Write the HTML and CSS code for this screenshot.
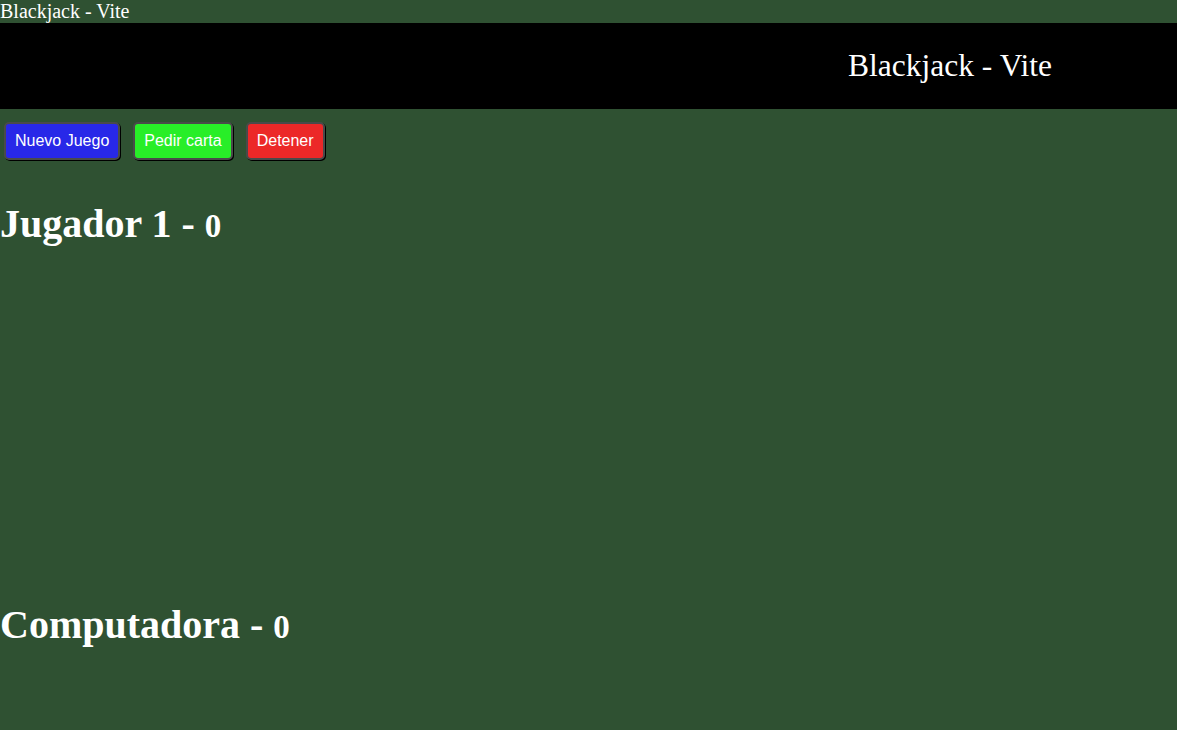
FILE: index.html
```html
<!DOCTYPE html>
<html lang="es">
<head>
<meta charset="utf-8">
<title>Blackjack - Vite</title>
<link rel="stylesheet" href="styles.css">
</head>
<body>
<div class="page-title">Blackjack - Vite</div>
<header class="topbar">
  <h1 class="topbar-title">Blackjack - Vite</h1>
</header>
<div class="controls">
  <button class="btn btn-blue">Nuevo Juego</button>
  <button class="btn btn-green">Pedir carta</button>
  <button class="btn btn-red">Detener</button>
</div>
<section class="player">
  <h1 class="player-name">Jugador 1 - <small>0</small></h1>
  <div class="cards"></div>
</section>
<section class="player">
  <h1 class="player-name">Computadora - <small>0</small></h1>
  <div class="cards cards-last"></div>
</section>
</body>
</html>
```
FILE: styles.css
```css
html, body {
  margin: 0;
  padding: 0;
}
html {
  background: #2f5132;
}
body {
  background: #2f5132;
  color: #ffffff;
  font-family: "Liberation Serif", "Times New Roman", serif;
  font-size: 20px;
}
.page-title {
  line-height: 23px;
  height: 23px;
}
.topbar {
  background: #000000;
  height: 86px;
  display: flex;
  align-items: center;
  justify-content: flex-end;
  padding-right: 125px;
}
.topbar-title {
  margin: 0;
  font-size: 31.5px;
  font-weight: normal;
}
.controls {
  display: flex;
  gap: 13px;
  padding: 13px 0 0 4px;
}
.btn {
  font-family: "Liberation Sans", Arial, sans-serif;
  font-size: 16px;
  color: #ffffff;
  height: 38px;
  padding: 0 9px;
  border: 2px solid #4a4a4a;
  border-radius: 5px;
  box-shadow: 1px 1px 0 #000000;
  cursor: pointer;
}
.btn-blue { background: #2828e8; }
.btn-green { background: #28ee28; }
.btn-red { background: #ec2828; }
.player-name {
  font-size: 40px;
  font-weight: bold;
  margin: 41px 0 0 0;
  line-height: 46px;
}
.player-name small {
  font-size: 33px;
}
.cards {
  height: 312px;
}
.cards-last {
  height: 40px;
}
```
